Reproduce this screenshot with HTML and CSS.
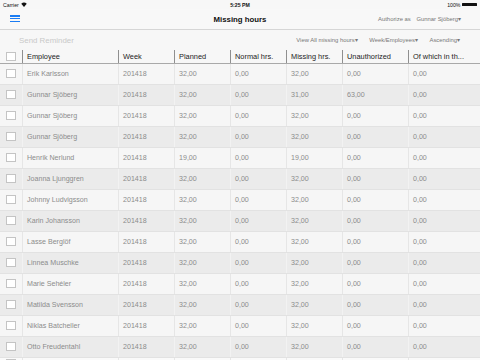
FILE: index.html
```html
<!DOCTYPE html>
<html lang="en">
<head>
  <meta charset="UTF-8">
  <title>Missing hours</title>
  <meta name="viewport" content="width=device-width, initial-scale=1.0">
  <link rel="stylesheet" href="styles.css">
</head>
<body>

  <div class="status">
    <span class="carrier">Carrier
      <svg class="wifi" width="6" height="5" viewBox="0 0 12 10"><path d="M6 10 L0.5 3.5 A8.5 8.5 0 0 1 11.5 3.5 Z" fill="#111"/></svg>
    </span>
    <span class="clock">5:25 PM</span>
    <span class="battery">100%<span class="cell"></span></span>
  </div>

  <div class="navbar">
    <div class="menu"><span></span><span></span><span></span></div>
    <div class="title">Missing hours</div>
    <div class="auth">Authorize as <span class="who">Gunnar Sjöberg▾</span></div>
  </div>

  <div class="toolbar">
    <span class="send">Send Reminder</span>
    <div class="filters">
      <span>View All missing hours▾</span>
      <span>Week/Employees▾</span>
      <span>Ascending▾</span>
    </div>
  </div>

  <div class="grid head">
    <div class="cell"><span class="box"></span></div>
    <div class="cell">Employee</div>
    <div class="cell">Week</div>
    <div class="cell">Planned</div>
    <div class="cell">Normal hrs.</div>
    <div class="cell">Missing hrs.</div>
    <div class="cell">Unauthorized</div>
    <div class="cell">Of which in th...</div>
  </div>

  <div class="rows" id="rows"></div>

  <script>
    // employee, planned, missing, unauthorized
    const data = [
      ["Erik Karlsson", "32,00", "32,00", "0,00"],
      ["Gunnar Sjöberg", "32,00", "31,00", "63,00"],
      ["Gunnar Sjöberg", "32,00", "32,00", "0,00"],
      ["Gunnar Sjöberg", "32,00", "32,00", "0,00"],
      ["Henrik Nerlund", "19,00", "19,00", "0,00"],
      ["Joanna Ljunggren", "32,00", "32,00", "0,00"],
      ["Johnny Ludvigsson", "32,00", "32,00", "0,00"],
      ["Karin Johansson", "32,00", "32,00", "0,00"],
      ["Lasse Berglöf", "32,00", "32,00", "0,00"],
      ["Linnea Muschke", "32,00", "32,00", "0,00"],
      ["Marie Sehéler", "32,00", "32,00", "0,00"],
      ["Matilda Svensson", "32,00", "32,00", "0,00"],
      ["Niklas Batcheller", "32,00", "32,00", "0,00"],
      ["Otto Freudentahl", "32,00", "32,00", "0,00"]
    ];

    const rows = document.getElementById('rows');
    let html = '';
    data.forEach(d => {
      html += `<div class="grid row">
        <div class="cell"><span class="box"></span></div>
        <div class="cell">${d[0]}</div>
        <div class="cell">201418</div>
        <div class="cell">${d[1]}</div>
        <div class="cell">0,00</div>
        <div class="cell">${d[2]}</div>
        <div class="cell">${d[3]}</div>
        <div class="cell">0,00</div>
      </div>`;
    });
    // only the top of the next row shows
    html += `<div class="grid row tail">
      <div class="cell"><span class="box"></span></div>
      <div class="cell"></div><div class="cell"></div><div class="cell"></div>
      <div class="cell"></div><div class="cell"></div><div class="cell"></div><div class="cell"></div>
    </div>`;
    rows.innerHTML = html;
  </script>

</body>
</html>
```

FILE: styles.css
```css
body {
  margin: 0;
  width: 480px;
  height: 360px;
  overflow: hidden;
  font-family: 'Liberation Sans', Arial, sans-serif;
  background: #f7f7f7;
  color: #222;
}

.status {
  height: 9.4px;
  display: flex;
  align-items: center;
  justify-content: space-between;
  padding: 0 3px;
  font-size: 5.2px;
  color: #111;
  position: relative;
}

.carrier {
  display: flex;
  align-items: center;
  gap: 2px;
}

.clock {
  position: absolute;
  left: 0;
  right: 0;
  text-align: center;
  font-weight: bold;
}

.battery {
  display: flex;
  align-items: center;
  gap: 1.5px;
}

.battery .cell {
  width: 9px;
  height: 3.5px;
  background: #111;
  border-radius: 0.5px;
  position: relative;
}

.battery .cell::after {
  content: "";
  position: absolute;
  right: -1.3px;
  top: 1px;
  width: 1px;
  height: 1.5px;
  background: #111;
}

.navbar {
  height: 19.6px;
  display: flex;
  align-items: center;
  justify-content: space-between;
  padding: 0 19px 0 10px;
  border-bottom: 1px solid #d6d6d6;
  background: #f8f8f8;
  position: relative;
}

.menu {
  display: flex;
  flex-direction: column;
  gap: 1.6px;
  width: 9.5px;
  margin-top: -1px;
}

.menu span {
  height: 1.2px;
  background: #1b7cf3;
}

.title {
  position: absolute;
  left: 0;
  right: 0;
  text-align: center;
  font-size: 7.8px;
  font-weight: bold;
  color: #111;
  pointer-events: none;
}

.auth {
  font-size: 5.9px;
  color: #777;
}

.who {
  margin-left: 4px;
}

.toolbar {
  height: 17.6px;
  display: flex;
  align-items: center;
  justify-content: space-between;
  padding: 0 20px 0 19px;
}

.send {
  font-size: 7.9px;
  color: #c9c9c9;
  margin-top: 3px;
}

.filters {
  display: flex;
  gap: 11.5px;
  font-size: 5.9px;
  color: #777;
  margin-top: 2px;
}

.grid {
  display: grid;
  grid-template-columns: 22px 96px 56px 56px 56px 56px 66px 72px;
}

.cell {
  display: flex;
  align-items: center;
  padding-left: 4px;
  white-space: nowrap;
  overflow: hidden;
}

.cell:first-child {
  padding-left: 6px;
}

.box {
  width: 9.5px;
  height: 9.5px;
  border: 0.8px solid #c4c4c4;
  background: #fff;
  box-sizing: border-box;
}

.head {
  height: 16px;
  box-sizing: border-box;
  border-bottom: 1.2px solid #a9a9a9;
  font-size: 7.4px;
  color: #222;
}

.head .cell + .cell {
  border-left: 1px solid #8f8f8f;
  margin: 2.5px 0 0;
}

.head .cell:first-child {
  margin-top: 2.5px;
}

.row {
  height: 21px;
  box-sizing: border-box;
  border-bottom: 0.6px solid #e2e2e2;
  font-size: 7.1px;
  color: #8c8c8c;
  background: #f6f6f6;
}

.row:nth-child(even) {
  background: #ebebeb;
}

.row .cell + .cell {
  border-left: 0.6px solid #e6e6e6;
}

.row:nth-child(even) .cell + .cell {
  border-left-color: #f2f2f2;
}

.row.tail {
  height: 2.4px;
  border-bottom: none;
  overflow: hidden;
  background: #fafafa;
}

.row.tail .cell {
  align-items: flex-start;
  padding-top: 1px;
}
```
